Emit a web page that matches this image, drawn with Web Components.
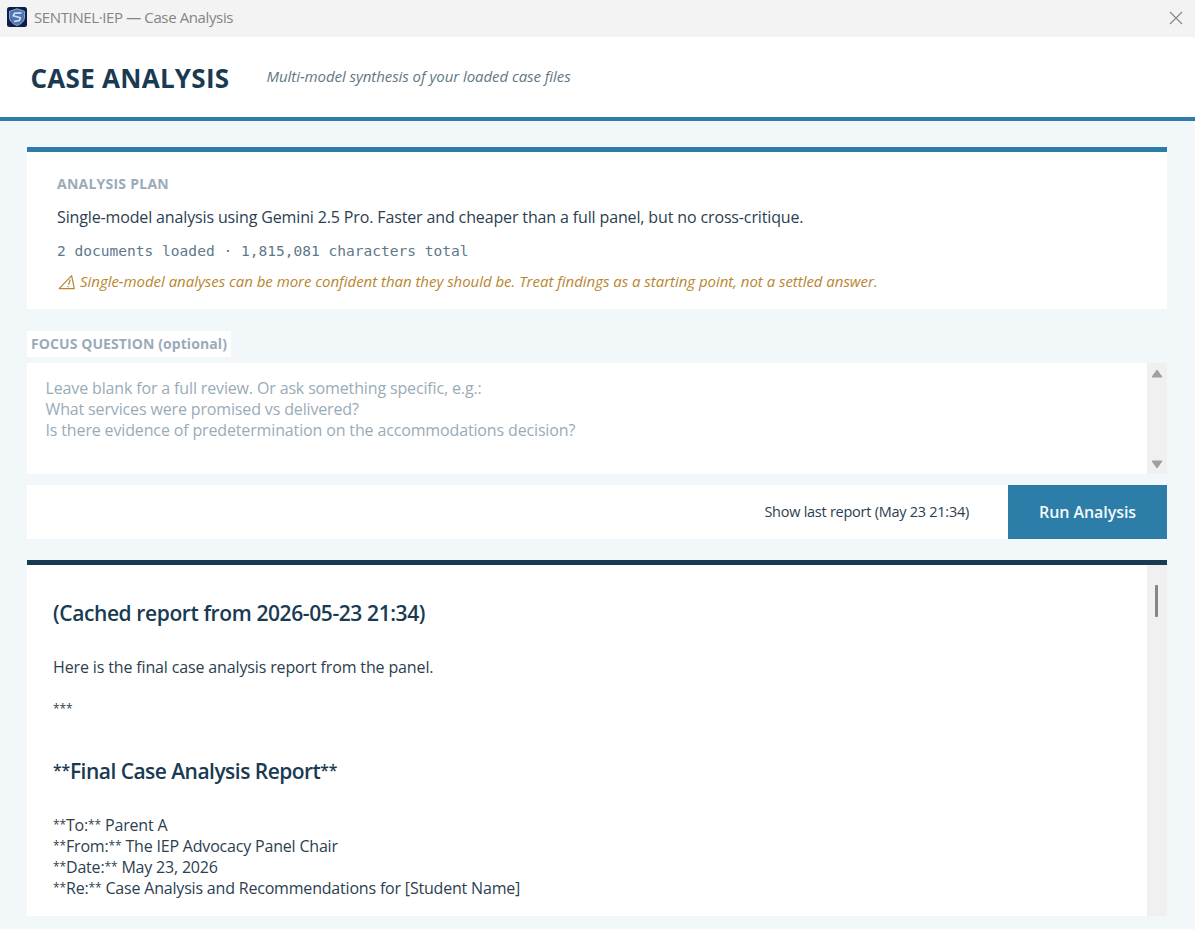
<!DOCTYPE html>
<html lang="en">
<head>
<meta charset="utf-8">
<title>SENTINEL·IEP — Case Analysis</title>
<style>
  html, body {
    margin: 0;
    height: 100%;
    overflow: hidden;
  }
  body {
    --navy: #1a3a52;
    --blue: #2c7da8;
    --text: #2c3e50;
    --muted: #9aabb8;
    font-family: "Open Sans", "Noto Sans", sans-serif;
    background: #f2f7f9;
    color: var(--text);
  }
</style>
</head>
<body>
<case-window>
  <title-bar slot="title">SENTINEL·IEP — Case Analysis</title-bar>
  <page-header slot="header">
    CASE ANALYSIS
    <span slot="subtitle">Multi-model synthesis of your loaded case files</span>
  </page-header>
  <plan-card>
    <span slot="heading">ANALYSIS PLAN</span>
    <span slot="summary">Single-model analysis using Gemini 2.5 Pro. Faster and cheaper than a full panel, but no cross-critique.</span>
    <span slot="stats">2 documents loaded · 1,815,081 characters total</span>
    <span slot="warning">Single-model analyses can be more confident than they should be. Treat findings as a starting point, not a settled answer.</span>
  </plan-card>
  <focus-question>
    <span slot="label">FOCUS QUESTION (optional)</span>
    <div>Leave blank for a full review. Or ask something specific, e.g.:</div>
    <div>What services were promised vs delivered?</div>
    <div>Is there evidence of predetermination on the accommodations decision?</div>
  </focus-question>
  <action-bar>
    <span slot="last">Show last report (May 23 21:34)</span>
    <span slot="run">Run Analysis</span>
  </action-bar>
  <report-view>
    <report-line kind="heading">(Cached report from 2026-05-23 21:34)</report-line>
    <report-line>Here is the final case analysis report from the panel.</report-line>
    <report-line kind="rule">***</report-line>
    <report-line kind="heading" tight>**Final Case Analysis Report**</report-line>
    <report-line tight>**To:** Parent A</report-line>
    <report-line tight>**From:** The IEP Advocacy Panel Chair</report-line>
    <report-line tight>**Date:** May 23, 2026</report-line>
    <report-line tight>**Re:** Case Analysis and Recommendations for [Student Name]</report-line>
  </report-view>
</case-window>

<script>
/**
 * @function define
 * @param {string} name
 * @param {string} html
 * @returns {void}
 */
const define = (name, html) => {
  const template = document.createElement('template');
  template.innerHTML = html;
  customElements.define(name, class extends HTMLElement {
    constructor () {
      super();
      this.attachShadow({mode: 'open'}).appendChild(template.content.cloneNode(true));
    }
  });
};

define('case-window', `
  <style>
  :host {
    display: flex;
    flex-direction: column;
    height: 929px;
  }
  main {
    flex: 1;
    min-height: 0;
    display: flex;
    flex-direction: column;
    padding: 26px 28px 13px 27px;
  }
  </style>
  <slot name="title"></slot>
  <slot name="header"></slot>
  <main><slot></slot></main>
`);

define('title-bar', `
  <style>
  :host {
    display: flex;
    align-items: center;
    height: 37px;
    padding: 0 12px 2px 7px;
    background: #f3f3f3;
    color: #858585;
    font-size: 15px;
    line-height: 20px;
    letter-spacing: -0.38px;
    box-sizing: border-box;
  }
  .logo {
    width: 20px;
    height: 20px;
    margin: 0 7px 1px 0;
  }
  .caption {
    flex: 1;
    padding-bottom: 1px;
  }
  .close {
    width: 14px;
    height: 14px;
  }
  </style>
  <svg class="logo" viewBox="0 0 20 20">
    <rect width="20" height="20" rx="2.5" fill="#101c4a"/>
    <path d="M10 1.8 L17.5 4.3 V10 C17.5 14.3 14 17.2 10 18.5 C6 17.2 2.5 14.3 2.5 10 V4.3 Z" fill="#4a76b4" stroke="#90a8cc" stroke-width="1"/>
    <path d="M14.5 5.8 L7.5 6.2 L6.3 8.7 L13.3 10.7 L12.3 13.5 L7 14.5" fill="none" stroke="#d5e1f2" stroke-width="1.7"/>
  </svg>
  <span class="caption"><slot></slot></span>
  <svg class="close" viewBox="0 0 14 14">
    <path d="M1 1 L13 13 M13 1 L1 13" stroke="#858585" stroke-width="1.1" fill="none"/>
  </svg>
`);

define('page-header', `
  <style>
  :host {
    display: flex;
    align-items: center;
    gap: 37px;
    height: 84px;
    padding: 0 31px 2px 30.5px;
    background: #fff;
    border-bottom: 4px solid var(--blue);
    box-sizing: border-box;
  }
  .name {
    color: var(--navy);
    font-size: 26px;
    font-weight: 700;
    line-height: 36px;
    letter-spacing: 0.28px;
    padding-top: 3px;
  }
  ::slotted(span) {
    color: #5f7785;
    font-size: 15px;
    font-style: italic;
    line-height: 20px;
    letter-spacing: -0.06px;
  }
  </style>
  <span class="name"><slot></slot></span>
  <slot name="subtitle"></slot>
`);

define('plan-card', `
  <style>
  :host {
    display: flex;
    flex-direction: column;
    height: 162px;
    padding: 22px 30px 0;
    background: #fff;
    border-top: 5px solid var(--blue);
    box-sizing: border-box;
    white-space: nowrap;
  }
  .heading {
    color: var(--muted);
    font-size: 14px;
    font-weight: 700;
    line-height: 20px;
    letter-spacing: 0.24px;
  }
  .summary {
    margin-top: 12px;
    font-size: 16px;
    line-height: 22px;
    letter-spacing: -0.138px;
  }
  .stats {
    margin-top: 13px;
    color: #607888;
    font: 14.55px/20px "DejaVu Sans Mono", monospace;
  }
  .warning {
    display: flex;
    align-items: center;
    gap: 4px;
    margin-top: 10px;
    color: #b8862f;
    font-size: 15px;
    font-style: italic;
    line-height: 20px;
    letter-spacing: -0.03px;
  }
  svg {
    width: 19px;
    height: 16px;
    margin-top: 1px;
  }
  </style>
  <div class="heading"><slot name="heading"></slot></div>
  <div class="summary"><slot name="summary"></slot></div>
  <div class="stats"><slot name="stats"></slot></div>
  <div class="warning">
    <svg viewBox="0 0 19 16" fill="none" stroke="currentColor" stroke-width="1.2">
      <path d="M2.2 14.7 L14.6 1.7 L17.3 14.7 Z" stroke-linejoin="round"/>
      <path d="M13.3 5.5 L11.6 10.8 M11.2 12 L10.9 13.2"/>
    </svg>
    <slot name="warning"></slot>
  </div>
`);

define('focus-question', `
  <style>
  :host {
    display: flex;
    flex-direction: column;
    align-items: flex-start;
    margin-top: 22px;
    white-space: nowrap;
  }
  .label {
    height: 26px;
    padding: 0 4px;
    background: #fff;
    color: var(--muted);
    font-size: 14px;
    font-weight: 700;
    line-height: 25px;
    letter-spacing: 0.087px;
  }
  .box {
    display: flex;
    align-self: stretch;
    height: 111px;
    margin-top: 6px;
    background: #fff;
  }
  .text {
    flex: 1;
    padding: 14.6px 18.5px 0;
    color: var(--muted);
    font-size: 16px;
    line-height: 21.3px;
    letter-spacing: -0.145px;
  }
  .bar {
    display: flex;
    flex-direction: column;
    align-items: center;
    justify-content: space-between;
    width: 20px;
    padding: 6px 0 5px;
    background: #f0f0f0;
    box-sizing: border-box;
  }
  svg {
    width: 12px;
    height: 9px;
  }
  </style>
  <div class="label"><slot name="label"></slot></div>
  <div class="box">
    <div class="text"><slot></slot></div>
    <div class="bar">
      <svg viewBox="0 0 12 9"><path d="M6 1 L11 8 H1 Z" fill="#a0a0a0" stroke="#a0a0a0" stroke-linejoin="round"/></svg>
      <svg viewBox="0 0 12 9"><path d="M6 8 L11 1 H1 Z" fill="#a0a0a0" stroke="#a0a0a0" stroke-linejoin="round"/></svg>
    </div>
  </div>
`);

define('action-bar', `
  <style>
  :host {
    display: flex;
    justify-content: flex-end;
    align-items: stretch;
    height: 54px;
    margin-top: 11px;
    background: #fff;
    white-space: nowrap;
  }
  button {
    margin: 0;
    padding: 0;
    border: 0;
    font-family: inherit;
    cursor: pointer;
  }
  .last {
    margin-right: 39px;
    padding-bottom: 2px;
    background: none;
    color: var(--text);
    font-size: 14.5px;
    letter-spacing: -0.26px;
  }
  .run {
    width: 159px;
    background: var(--blue);
    color: #f4f9fc;
    font-size: 16px;
    font-weight: 600;
    letter-spacing: -0.066px;
  }
  </style>
  <button class="last"><slot name="last"></slot></button>
  <button class="run"><slot name="run"></slot></button>
`);

define('report-view', `
  <style>
  :host {
    display: flex;
    flex: 1;
    min-height: 0;
    margin-top: 21px;
    background: #fff;
    border-top: 5px solid var(--navy);
    box-sizing: border-box;
    white-space: nowrap;
  }
  .body {
    flex: 1;
    padding: 34px 26px 0;
  }
  .bar {
    width: 20px;
    padding: 20px 0 0 8px;
    background: #f0f0f0;
    box-sizing: border-box;
  }
  .thumb {
    width: 3px;
    height: 32px;
    border-radius: 1px;
    background: #858585;
  }
  </style>
  <div class="body"><slot></slot></div>
  <div class="bar"><div class="thumb"></div></div>
`);

/**
 * One line of the raw markdown report.
 * @class ReportLine
 */
class ReportLine extends HTMLElement {
  constructor () {
    super();
    this.attachShadow({mode: 'open'}).innerHTML = `
      <style>
      :host {
        display: block;
        font-size: 16px;
        line-height: 21.3px;
        letter-spacing: -0.14px;
      }
      :host([tight]) {
        letter-spacing: -0.19px;
      }
      :host([kind="heading"]) {
        margin-bottom: 30px;
        color: var(--navy);
        font-size: 21px;
        font-weight: 600;
        line-height: 28px;
        letter-spacing: -0.4px;
      }
      :host([kind="heading"][tight]) {
        letter-spacing: -0.53px;
      }
      :host([kind="rule"]) {
        margin: 21px 0 36px;
      }
      .stars {
        font-size: 0.75em;
        line-height: 0;
        letter-spacing: -0.01em;
        vertical-align: 0.18em;
      }
      </style>
      <span></span>`;
  }
  /**
   * @function connectedCallback
   * @returns {void}
   */
  connectedCallback () {
    // asterisk runs are set smaller than the words
    this.shadowRoot.querySelector('span').innerHTML =
      this.textContent.replace(/\*+/g, '<span class="stars">$&</span>');
  }
}
customElements.define('report-line', ReportLine);
</script>
</body>
</html>
